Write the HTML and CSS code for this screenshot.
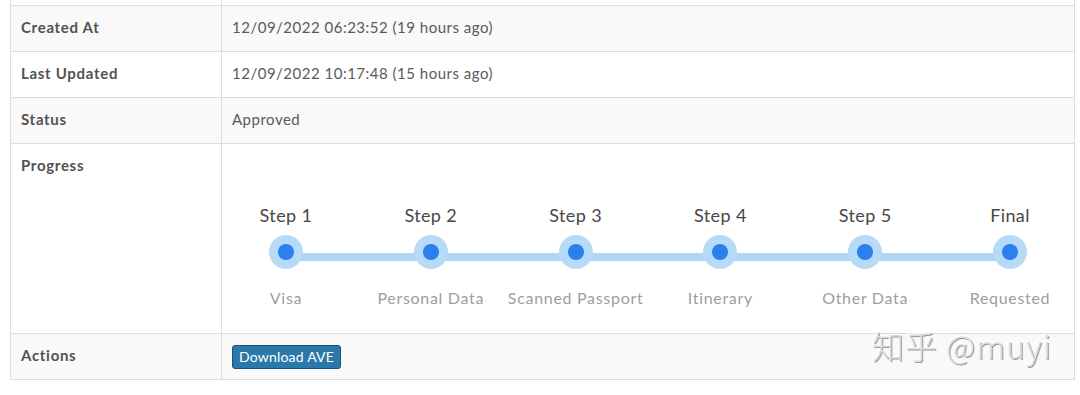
FILE: index.html
```html
<!DOCTYPE html>
<html>
<head>
<meta charset="utf-8">
<link rel="stylesheet" href="styles.css">
</head>
<body>
<div class="details">
  <div class="row row-cut">
    <div class="label"></div>
    <div class="value"></div>
  </div>
  <div class="row shaded">
    <div class="label">Created At</div>
    <div class="value">12/09/2022 06:23:52 (19 hours ago)</div>
  </div>
  <div class="row">
    <div class="label">Last Updated</div>
    <div class="value">12/09/2022 10:17:48 (15 hours ago)</div>
  </div>
  <div class="row shaded">
    <div class="label">Status</div>
    <div class="value">Approved</div>
  </div>
  <div class="row">
    <div class="label">Progress</div>
    <div class="value">
      <div class="stepper">
        <div class="track"></div>
        <div class="step"><div class="step-title">Step 1</div><div class="dot"></div><div class="step-name">Visa</div></div>
        <div class="step"><div class="step-title">Step 2</div><div class="dot"></div><div class="step-name">Personal Data</div></div>
        <div class="step"><div class="step-title">Step 3</div><div class="dot"></div><div class="step-name">Scanned Passport</div></div>
        <div class="step"><div class="step-title">Step 4</div><div class="dot"></div><div class="step-name">Itinerary</div></div>
        <div class="step"><div class="step-title">Step 5</div><div class="dot"></div><div class="step-name">Other Data</div></div>
        <div class="step"><div class="step-title">Final</div><div class="dot"></div><div class="step-name">Requested</div></div>
      </div>
    </div>
  </div>
  <div class="row shaded">
    <div class="label">Actions</div>
    <div class="value"><button class="btn">Download AVE</button></div>
  </div>
</div>
<div class="watermark">知乎 @muyi</div>
</body>
</html>
```
FILE: styles.css
```css
html, body {
  margin: 0;
  padding: 0;
  background: #fff;
}
body {
  font-family: "Lato", "Open Sans", sans-serif;
  color: #555;
  font-size: 15px;
  position: relative;
  height: 395px;
  overflow: hidden;
}
.details {
  margin-left: 10px;
  width: 1065px;
  box-sizing: border-box;
  border-left: 1px solid #dddddd;
  border-right: 1px solid #dddddd;
  border-bottom: 1px solid #dddddd;
}
.row {
  display: grid;
  grid-template-columns: 211px 1fr;
  border-top: 1px solid #dddddd;
  background: #fff;
}
.row.shaded {
  background: #f9f9f9;
}
.row-cut {
  border-top: none;
  height: 5px;
}
.row-cut .label, .row-cut .value {
  padding: 0;
}
.label {
  box-sizing: border-box;
  border-right: 1px solid #dddddd;
  padding: 11px 10px 13px;
  line-height: 21px;
  font-weight: 700;
  color: #525252;
  letter-spacing: 0.7px;
}
.value {
  padding: 11px 10px 13px;
  line-height: 21px;
  color: #5a5a5a;
  letter-spacing: 0.5px;
}
.stepper {
  position: relative;
  display: flex;
  justify-content: space-between;
  margin-top: 48px;
  padding-bottom: 12px;
  letter-spacing: 0;
}
.track {
  position: absolute;
  left: 54px;
  right: 54px;
  top: 50px;
  height: 8px;
  background: #afd6f6;
}
.step {
  position: relative;
  width: 108px;
  display: flex;
  flex-direction: column;
  align-items: center;
}
.step-title {
  font-size: 18px;
  line-height: 24px;
  color: #474747;
  letter-spacing: 0.4px;
  white-space: nowrap;
}
.dot {
  margin-top: 8px;
  width: 34px;
  height: 34px;
  border-radius: 50%;
  background: #b6daf7;
  display: flex;
  align-items: center;
  justify-content: center;
}
.dot::after {
  content: "";
  width: 16px;
  height: 16px;
  border-radius: 50%;
  background: #2b7fee;
}
.step-name {
  margin-top: 19px;
  font-size: 16px;
  line-height: 20px;
  color: #9e9e9e;
  letter-spacing: 0.7px;
  white-space: nowrap;
}
.btn {
  font-family: inherit;
  font-size: 14px;
  line-height: 18px;
  color: #fff;
  background: #2b78aa;
  border: 1px solid #1a5378;
  border-radius: 3px;
  padding: 2px 4px;
  width: 109px;
  height: 24px;
  margin: 0 0 -3px;
  display: block;
  letter-spacing: 0.2px;
}
.watermark {
  position: absolute;
  left: 872px;
  top: 325px;
  font-family: "Noto Sans CJK SC", "Noto Sans", sans-serif;
  font-size: 32px;
  font-weight: 300;
  line-height: 40px;
  color: #dcdcdc;
  letter-spacing: 1px;
  text-shadow: 1px 1px 0 #9a9a9a, -1px -1px 0 #ffffff;
  white-space: nowrap;
}
```
